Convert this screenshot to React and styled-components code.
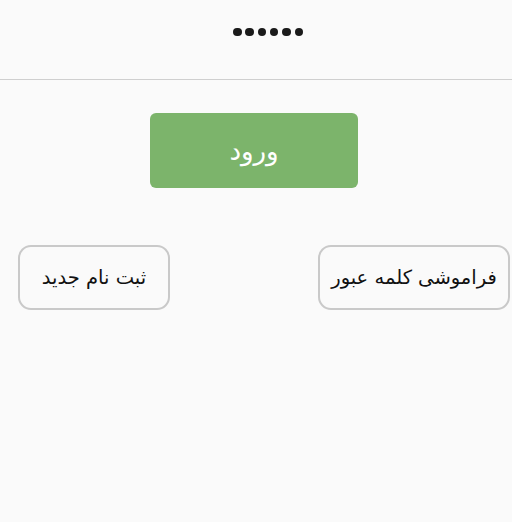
import styled, { createGlobalStyle } from "styled-components";

const GlobalStyle = createGlobalStyle`
  html, body {
    margin: 0;
    padding: 0;
    background: #fafafa;
  }
`;

const App = () => {
    return (
        <>
        <GlobalStyle />
        <Page dir="rtl">
            <PasswordRow>
                <Dots aria-label="password">
                    {Array.from({ length: 6 }).map((_, i) => <Dot key={i} />)}
                </Dots>
            </PasswordRow>
            <Actions>
                <LoginButton>ورود</LoginButton>
            </Actions>
            <LinksRow>
                <OutlineButton $width={192}>فراموشی کلمه عبور</OutlineButton>
                <OutlineButton $width={152}>ثبت نام جدید</OutlineButton>
            </LinksRow>
        </Page>
        </>
    );
};

const Page = styled.div`
    width: 512px;
    height: 522px;
    background: #fafafa;
    font-family: "DejaVu Sans", "Noto Sans", sans-serif;
    display: flex;
    flex-direction: column;
`

const PasswordRow = styled.div`
    height: 80px;
    display: flex;
    align-items: center;
    justify-content: center;
    border-bottom: 1.5px solid #cfcfcf;
    padding: 0 0 15px 24px;
    box-sizing: border-box;
`

const Dots = styled.div`
    display: flex;
    gap: 3.8px;
    direction: ltr;
`

const Dot = styled.span`
    width: 8.5px;
    height: 8.5px;
    border-radius: 50%;
    background: #1a1a1a;
`

const Actions = styled.div`
    display: flex;
    justify-content: center;
    padding: 33px 4px 0 0;
`

const LoginButton = styled.button`
    width: 208px;
    height: 75px;
    border: none;
    border-radius: 6px;
    background: #7cb46b;
    color: #ffffff;
    font-family: inherit;
    font-size: 26px;
    font-weight: 400;
    cursor: pointer;
`

const LinksRow = styled.div`
    display: flex;
    justify-content: space-between;
    padding: 57px 2px 0 18px;
`

const OutlineButton = styled.button`
    width: ${props => props.$width}px;
    height: 65px;
    padding: 0;
    border: 2px solid #c9c9c9;
    border-radius: 13px;
    background: #fafafa;
    color: #111111;
    font-family: inherit;
    font-size: 19.5px;
    font-weight: 500;
    cursor: pointer;
`

export default App;
